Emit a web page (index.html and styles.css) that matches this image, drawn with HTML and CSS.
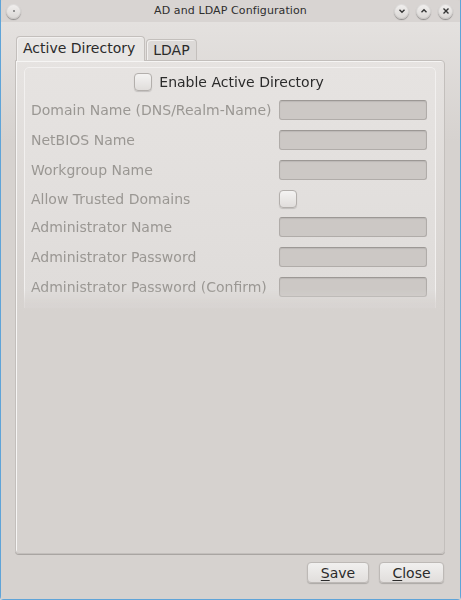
FILE: index.html
```html
<!DOCTYPE html>
<html>
<head>
<meta charset="utf-8">
<link rel="stylesheet" href="styles.css">
</head>
<body>
<div class="window">
  <div class="titlebar">
    <span class="tb-btn menu"><span class="dot"></span></span>
    <span class="title">AD and LDAP Configuration</span>
    <span class="tb-btns">
      <span class="tb-btn"><svg width="8" height="8" viewBox="0 0 8 8"><path d="M1.5 2.8 L4 5.2 L6.5 2.8" fill="none" stroke="#333" stroke-width="1.4"/></svg></span>
      <span class="tb-btn"><svg width="8" height="8" viewBox="0 0 8 8"><path d="M1.5 5.2 L4 2.8 L6.5 5.2" fill="none" stroke="#333" stroke-width="1.4"/></svg></span>
      <span class="tb-btn"><svg width="8" height="8" viewBox="0 0 8 8"><path d="M1.5 1.5 L6.5 6.5 M6.5 1.5 L1.5 6.5" fill="none" stroke="#333" stroke-width="1.4"/></svg></span>
    </span>
  </div>
  <div class="content">
    <div class="tabs">
      <div class="tab active">Active Directory</div>
      <div class="tab">LDAP</div>
    </div>
    <div class="panel">
      <div class="group">
        <div class="enable-row">
          <span class="check"></span>
          <span class="enable-label">Enable Active Directory</span>
        </div>
        <div class="form">
          <div class="row"><span class="label">Domain Name (DNS/Realm-Name)</span><span class="input"></span></div>
          <div class="row"><span class="label">NetBIOS Name</span><span class="input"></span></div>
          <div class="row"><span class="label">Workgroup Name</span><span class="input"></span></div>
          <div class="row short"><span class="label">Allow Trusted Domains</span><span class="check"></span></div>
          <div class="row"><span class="label">Administrator Name</span><span class="input"></span></div>
          <div class="row"><span class="label">Administrator Password</span><span class="input"></span></div>
          <div class="row"><span class="label">Administrator Password (Confirm)</span><span class="input"></span></div>
        </div>
      </div>
    </div>
    <div class="buttons">
      <button class="btn"><u>S</u>ave</button>
      <button class="btn"><u>C</u>lose</button>
    </div>
  </div>
</div>
</body>
</html>
```

FILE: styles.css
```css
html, body {
  margin: 0;
  padding: 0;
  background: #d6d2d0;
}
.window {
  width: 461px;
  height: 600px;
  box-sizing: border-box;
  border: 1px solid #5fa4d8;
  border-top: none;
  border-radius: 0 0 4px 4px;
  background: #d6d2cf;
  font-family: "DejaVu Sans", sans-serif;
  display: flex;
  flex-direction: column;
}
.titlebar {
  height: 22px;
  flex: none;
  display: flex;
  align-items: center;
  padding: 0 7px 0 5px;
  background: #d8d4d2;
  position: relative;
  border-radius: 4px 4px 0 0;
}
.title {
  position: absolute;
  left: 0;
  right: 0;
  top: 4px;
  text-align: center;
  font-size: 11px;
  color: #2e2e2e;
  letter-spacing: 0.1px;
}
.tb-btns {
  margin-left: auto;
  display: flex;
  gap: 7px;
  position: relative;
}
.tb-btn {
  width: 15px;
  height: 15px;
  border-radius: 50%;
  background: linear-gradient(#f2f0ef, #d9d6d4);
  box-shadow: 0 1px 1px rgba(0,0,0,0.35), inset 0 0 0 1px rgba(0,0,0,0.08);
  display: flex;
  align-items: center;
  justify-content: center;
}
.tb-btn.menu .dot {
  width: 2px;
  height: 2px;
  border-radius: 50%;
  background: #777;
}
.content {
  flex: 1;
  display: flex;
  flex-direction: column;
  padding: 15px 15px 16px 14px;
  background: linear-gradient(#e4e1df 0, #d6d2cf 120px);
}
.tabs {
  display: flex;
  align-items: flex-end;
  padding-left: 1px;
  height: 23px;
  gap: 1px;
  position: relative;
  z-index: 1;
}
.tab {
  font-size: 14px;
  color: #2b2b2b;
  padding: 0 6px;
  border: 1px solid #c3bfbc;
  border-bottom: none;
  border-radius: 4px 4px 0 0;
  background: #dcd9d7;
  height: 20px;
  line-height: 20px;
  box-shadow: inset 1px 1px 0 #f2f0ef;
}
.tab.active {
  height: 24px;
  line-height: 22px;
  background: #e8e6e4;
  margin-bottom: -1px;
  padding: 0 9px 0 6px;
}
.panel {
  flex: 1;
  border: 1px solid #c3bfbc;
  border-radius: 0 4px 4px 4px;
  box-shadow: inset 1px 1px 0 #f6f5f4, 0 1px 0 #a9a5a2;
  background: linear-gradient(#e6e3e1 0, #d6d2cf 250px);
  padding: 6px 8px 0 8px;
}
.group {
  border: 1px solid #f2f0ef;
  border-bottom: none;
  border-radius: 5px 5px 0 0;
  background: linear-gradient(#e6e3e1, #dfdcda 230px);
  padding: 4px 8px 0 6px;
  height: 236px;
  position: relative;
  -webkit-mask-image: linear-gradient(#000 222px, rgba(0,0,0,0.3) 236px);
}
.enable-row {
  display: flex;
  align-items: center;
  justify-content: center;
  gap: 7px;
  height: 20px;
  margin-bottom: 8px;
}
.enable-label {
  font-size: 14px;
  color: #2b2b2b;
}
.check {
  width: 16px;
  height: 16px;
  border-radius: 4px;
  background: linear-gradient(#f4f3f2, #e0dddb);
  border: 1px solid #b3afac;
  box-shadow: 0 1px 1px rgba(0,0,0,0.15);
  flex: none;
}
.form {
  display: flex;
  flex-direction: column;
  gap: 10px;
}
.row {
  display: grid;
  grid-template-columns: 248px 148px;
  align-items: center;
  height: 20px;
}
.row.short {
  height: 17px;
}
.label {
  font-size: 14px;
  color: #9a9793;
  white-space: nowrap;
}
.input {
  height: 18px;
  border: 1px solid #b0aca9;
  border-top-color: #9c9895;
  border-radius: 3px;
  background: #ccc8c5;
  box-shadow: inset 0 1px 1px rgba(0,0,0,0.08);
}
.buttons {
  display: flex;
  justify-content: flex-end;
  gap: 10px;
  padding-top: 8px;
  padding-right: 1px;
}
.btn {
  font-family: "DejaVu Sans", sans-serif;
  font-size: 14px;
  color: #2b2b2b;
  height: 21px;
  padding: 0;
  border: 1px solid #bdb9b6;
  border-radius: 4px;
  background: linear-gradient(#f1f0ef, #e1dedc);
  box-shadow: 0 1px 1px rgba(0,0,0,0.2);
  line-height: 18px;
}
.btn:first-child { width: 62px; }
.btn:last-child { width: 65px; }
.btn u { text-underline-offset: 2px; }
```
